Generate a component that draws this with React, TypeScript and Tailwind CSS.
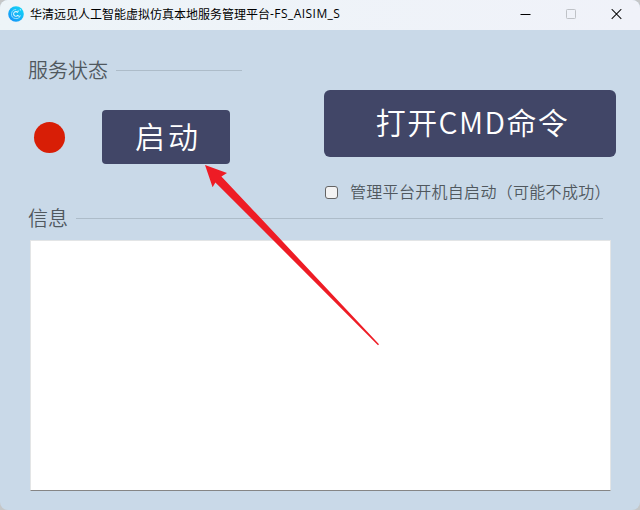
function Logo() {
  return (
    <svg className="ml-2 -mt-0.5 size-4 shrink-0" viewBox="0 0 16 16" fill="none">
      <defs>
        <linearGradient id="logo" x1="13" y1="2" x2="3" y2="14" gradientUnits="userSpaceOnUse">
          <stop stopColor="#12d2f7" />
          <stop offset="1" stopColor="#1597f8" />
        </linearGradient>
      </defs>
      <circle cx="8" cy="8" r="7.8" fill="url(#logo)" />
      <path d="M8.2 3.6A4.5 4.5 0 1 0 12.4 9.2" stroke="#a5e6ff" strokeWidth="0.9" />
      <path d="M9.8 6.6A2.3 2.3 0 1 0 9.7 9.4L11.6 10.6" stroke="#e0f7ff" strokeWidth="1.1" />
      <path d="M9.6 5.2h1.2M11.8 3.9h1" stroke="#d5f4ff" strokeWidth="1.2" />
    </svg>
  );
}

function TitleBar() {
  return (
    <header className="flex h-[30px] shrink-0 items-center bg-gradient-to-r from-[#edf4f8] to-[#f0f2f9]">
      <Logo />
      <h1 className="ml-1.5 -mt-0.5 flex h-[18px] items-center whitespace-nowrap text-[12px] font-normal leading-[18px] text-black">
        华清远见人工智能虚拟仿真本地服务管理平台
        <span className="font-['Open_Sans','Noto_Sans',sans-serif] text-[12px] font-normal tracking-[0.45px]">-FS_AISIM_S</span>
      </h1>
      <div className="ml-auto mr-[18px] -mt-0.5 flex items-center">
        <svg className="mr-[34px] h-[11px] w-[11px]" viewBox="0 0 11 11">
          <path d="M0.5 5.5h10" stroke="#000" />
        </svg>
        <svg className="mr-[35px] h-[11px] w-[11px]" viewBox="0 0 11 11" fill="none">
          <rect x="1.5" y="0.5" width="9" height="9" rx="0.8" stroke="#bfc2c7" />
        </svg>
        <svg className="h-[11px] w-[11px]" viewBox="0 0 11 11" fill="none">
          <path d="M0.7 0.2l9.6 9.6M10.3 0.2L0.7 9.8" stroke="#111" strokeWidth="1.1" />
        </svg>
      </div>
    </header>
  );
}

export default function App() {
  return (
    <div className="h-[510px] w-[640px] overflow-hidden bg-[#c5c7c8] font-['Noto_Sans_CJK_SC',sans-serif]">
      <div className="relative flex h-full flex-col overflow-hidden rounded-lg bg-[#c9d9e8]">
        <TitleBar />
        <div className="flex h-[174px] shrink-0">
          <section className="w-[324px] pl-7 pt-[26px]">
            <div className="flex h-7 items-center">
              <h2 className="whitespace-nowrap text-[20px] font-[350] leading-7 text-[#50585e]">服务状态</h2>
              <div className="ml-2 h-px w-[126px] bg-[#adbcc9]" />
            </div>
            <div className="mt-[26px] flex items-center pl-1.5">
              <div className="size-[31px] rounded-full bg-[#d81e06]" />
              <button className="ml-[37px] flex h-[54px] w-32 items-center justify-center rounded bg-[#414667] pb-[5px] pl-1 text-[30px] font-[350] leading-none tracking-[3px] text-white">
                启动
              </button>
            </div>
          </section>
          <section className="pt-[60px]">
            <button className="flex h-[67px] w-[292px] items-center justify-center rounded-md bg-[#414667] pb-1.5 pl-[5px] text-[30px] font-[350] leading-none tracking-[1.4px] text-white">
              打开CMD命令
            </button>
            <label className="mt-[23px] flex h-6 items-center pl-px">
              <span className="size-[13px] shrink-0 rounded-[3px] border border-[#646464] bg-[#f3f3f3]" />
              <span className="-mt-[3px] ml-3 whitespace-nowrap text-[16px] font-[350] leading-6 tracking-[0.3px] text-[#50585e]">
                管理平台开机自启动（可能不成功）
              </span>
            </label>
          </section>
        </div>
        <section className="flex flex-col pl-7">
          <div className="flex h-7 items-center">
            <h2 className="text-[20px] font-[350] leading-7 text-[#50585e]">信息</h2>
            <div className="ml-2 h-px w-[527px] bg-[#adbcc9]" />
          </div>
          <div className="ml-0.5 mt-2 h-[251px] w-[581px] rounded-t-[1px] border border-[#e3e5e6] border-b-[#858585] bg-white" />
        </section>
        <svg
          className="pointer-events-none absolute left-0 top-0"
          width="640"
          height="510"
          viewBox="0 0 640 510"
        >
          <path
            d="M205 165L227 173L221.4 176.4L379 344.2L378 345.2L215.4 182.4L212.6 187.3Z"
            fill="#ee1c25"
          />
        </svg>
      </div>
    </div>
  );
}
